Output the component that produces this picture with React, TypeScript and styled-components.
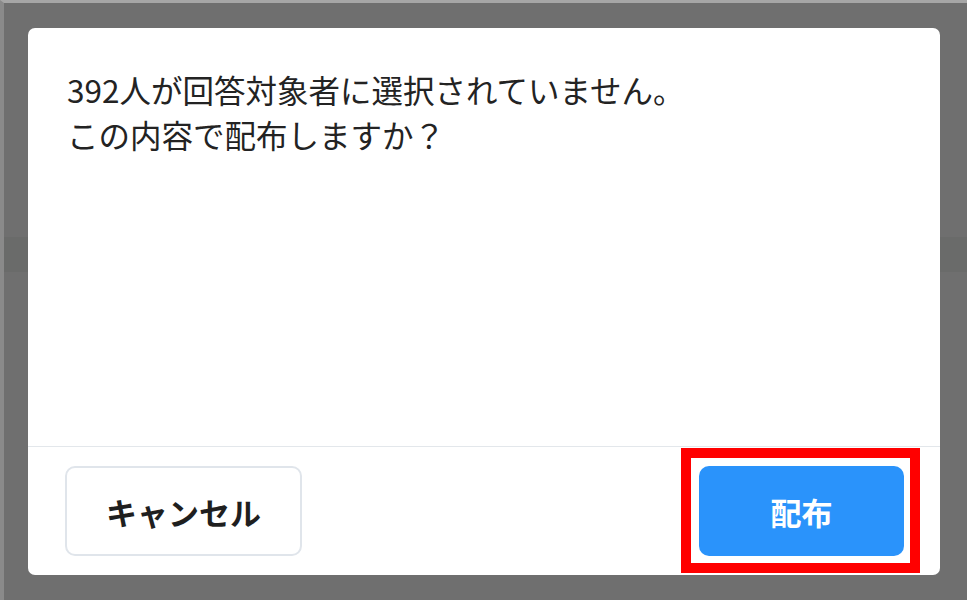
import styled, { createGlobalStyle } from 'styled-components';

const GlobalStyle = createGlobalStyle`
  html, body {
    margin: 0;
    padding: 0;
    height: 100%;
  }
  body {
    font-family: "Noto Sans CJK JP", "Noto Sans", sans-serif;
    color: #222;
  }
`;

const App = () => {
  return (
    <>
      <GlobalStyle />
      <Backdrop>
        <Dialog>
          <Body>
            <Message>
              392人が回答対象者に選択されていません。
              <br />
              この内容で配布しますか？
            </Message>
          </Body>
          <Footer>
            <CancelButton>キャンセル</CancelButton>
            <Highlight>
              <PrimaryButton>配布</PrimaryButton>
            </Highlight>
          </Footer>
        </Dialog>
      </Backdrop>
    </>
  );
};

const Backdrop = styled.div`
  box-sizing: border-box;
  width: 100%;
  height: 600px;
  padding: 25px 27px 25px 24px;
  border-top: 3px solid #a6a6a6;
  border-left: 4px solid #8a8a8a;
  background: linear-gradient(
    to bottom,
    #6f6f6f 0,
    #6f6f6f 234px,
    #6a6b6a 234px,
    #6a6b6a 269px,
    #6f6f6f 269px
  );
  display: flex;
`;

const Dialog = styled.div`
  flex: 1;
  height: 547px;
  background: #fff;
  border-radius: 7px;
  display: flex;
  flex-direction: column;
`;

const Body = styled.div`
  flex: 1;
  padding: 39px 38px 0 39px;
`;

const Message = styled.p`
  margin: 0;
  font-size: 31.5px;
  line-height: 45px;
  color: #232323;
`;

const Footer = styled.div`
  box-sizing: border-box;
  border-top: 1px solid #e3e7eb;
  padding: 19px 36px 19px 37px;
  display: flex;
  align-items: stretch;
  justify-content: space-between;
`;

const BaseButton = styled.button`
  height: 90px;
  box-sizing: border-box;
  border-radius: 10px;
  font-family: "Noto Sans CJK JP", "Noto Sans", sans-serif;
  font-size: 31px;
  font-weight: 700;
  cursor: pointer;
`;

const CancelButton = styled(BaseButton)`
  width: 237px;
  background: #fff;
  color: #1f1f1f;
  border: 2px solid #e0e5eb;
`;

const Highlight = styled.div`
  position: relative;
  display: flex;

  &::after {
    content: '';
    position: absolute;
    top: -18px;
    left: -18px;
    right: -16px;
    bottom: -17px;
    border: 10px solid #ff0000;
    pointer-events: none;
  }
`;

const PrimaryButton = styled(BaseButton)`
  width: 205px;
  background: #2a93fb;
  color: #fff;
  border: none;
`;

export default App;
